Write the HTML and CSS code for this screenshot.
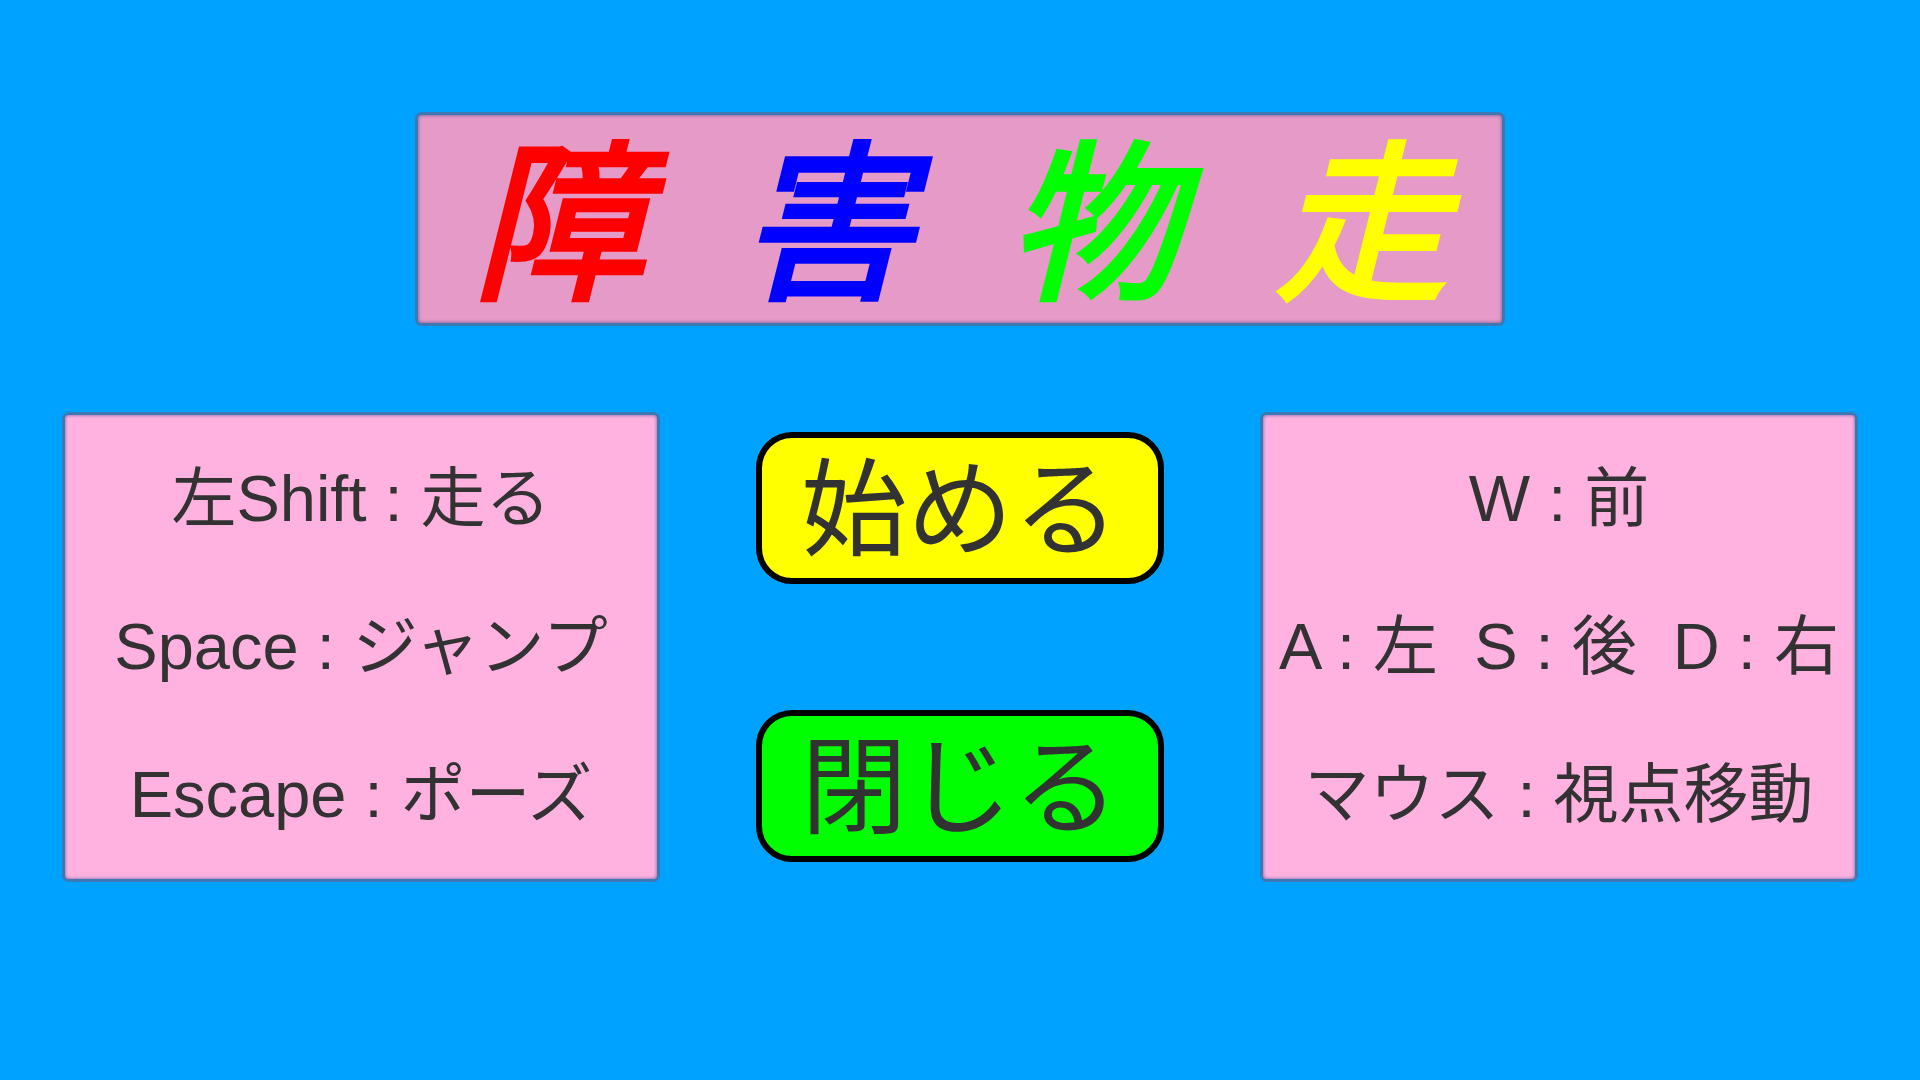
FILE: index.html
```html
<!DOCTYPE html>
<html lang="ja">
<head>
  <meta charset="UTF-8" />
  <meta name="viewport" content="width=device-width, initial-scale=1.0" />
  <title>障害物走</title>
  <link rel="stylesheet" href="styles.css">
</head>
<body>

  <h1 class="title"><span class="red">障</span>  <span class="blue">害</span>  <span class="green">物</span>  <span class="yellow">走</span></h1>

  <main class="menu">
    <section class="panel">
      <p>左Shift : 走る</p>
      <p>Space : ジャンプ</p>
      <p>Escape : ポーズ</p>
    </section>

    <div class="buttons">
      <button type="button" class="start">始める</button>
      <button type="button" class="quit">閉じる</button>
    </div>

    <section class="panel">
      <p>W : 前</p>
      <p>A : 左  S : 後  D : 右</p>
      <p>マウス : 視点移動</p>
    </section>
  </main>

</body>
</html>
```
FILE: styles.css
```css
* { box-sizing: border-box; }

body {
  margin: 0;
  padding: 112px 62px;
  min-height: 100vh;
  background: #00a2ff;
  color: #323232;
  font-family: "Liberation Sans", "Noto Sans CJK JP", sans-serif;
}

.title, .panel {
  border: 3px solid #3d78b4;
  border-radius: 7px;
}

/* タイトル */
.title {
  width: fit-content;
  margin: 0 auto 86px;
  padding: 14px 55px 0;
  background: #e59ac8;
  box-shadow: inset 0 0 3px 1px #96709e;
  font-size: 172px;
  font-weight: 400;
  font-style: italic;
  line-height: 194px;
  white-space: pre;
  -webkit-text-stroke: 5px;
}
.red { color: #ff0000; }
.blue { color: #0000ff; }
.green { color: #00ff00; }
.yellow { color: #ffff00; }

.menu {
  display: grid;
  grid-template-columns: 598fr 408fr 598fr;
  gap: 96px;
  align-items: center;
}

/* 操作説明 */
.panel {
  padding: 10px 0;
  background: #ffb2e0;
  box-shadow: inset 0 0 3px 1px #a080b8;
  font-size: 65px;
  line-height: 148px;
  text-align: center;
}
.panel p {
  margin: 0;
  white-space: pre;
}

/* ボタン */
.buttons {
  display: flex;
  flex-direction: column;
  gap: 126px;
}
.buttons button {
  padding: 4px 0 0;
  border: 6px solid #000;
  border-radius: 36px;
  color: inherit;
  font-family: inherit;
  font-size: 106px;
  line-height: 136px;
  cursor: pointer;
}
.buttons .start { background: #ffff00; }
.buttons .quit { background: #00ff00; }
```
